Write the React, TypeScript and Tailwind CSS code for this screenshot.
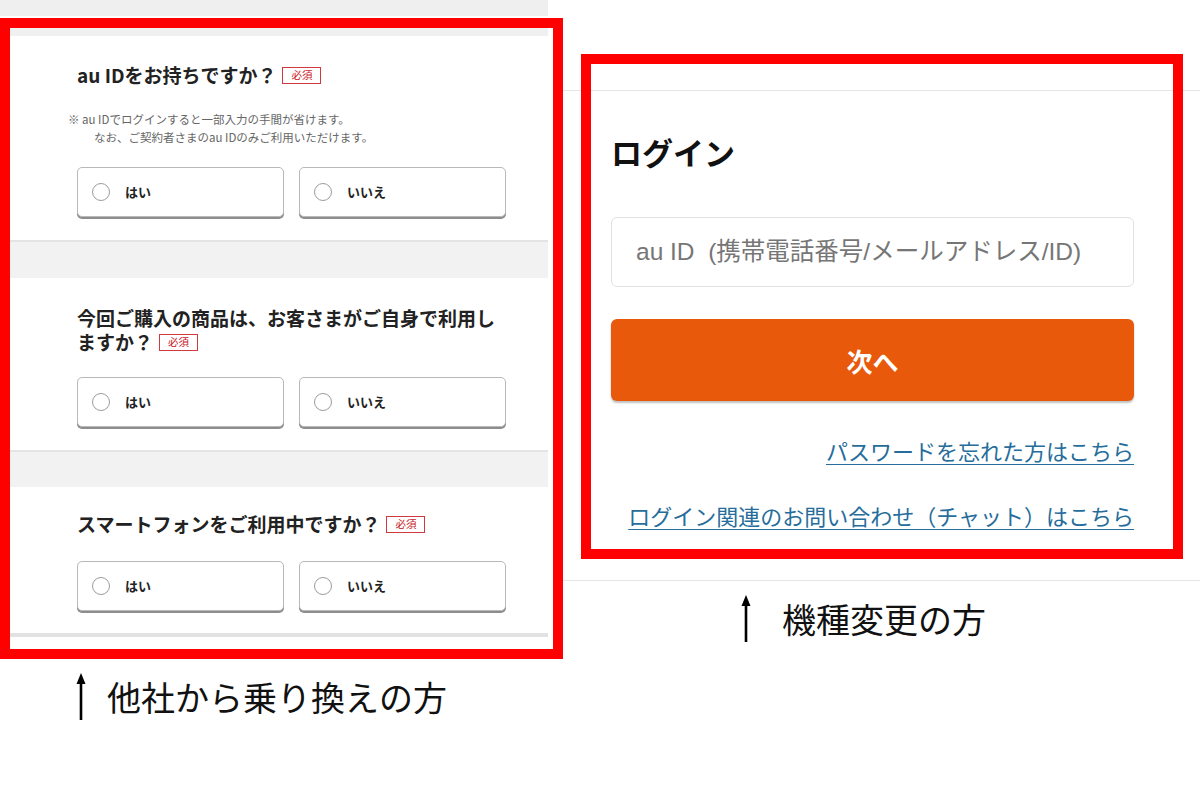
import React from "react";

const JP = "font-['Noto_Sans_CJK_JP','Noto_Sans',sans-serif]";

function Badge({ className = "" }: { className?: string }) {
  return (
    <span
      className={`inline-flex h-[17px] items-center border border-[#d2393f] bg-white px-[8px] text-[10.5px] leading-none font-normal text-[#c9161e] ${className}`}
    >
      必須
    </span>
  );
}

function Opt({ label }: { label: string }) {
  return (
    <div className="flex h-[50px] w-[207px] items-center rounded-[5px] border border-[#b9b9b9] bg-white pl-[14px] shadow-[0_2px_0_0_#8d8d8d]">
      <span className="h-[18px] w-[18px] rounded-full border border-[#9c9c9c] bg-white" />
      <span className="ml-[15px] text-[13px] font-bold text-[#222]">{label}</span>
    </div>
  );
}

function Opts({ className = "" }: { className?: string }) {
  return (
    <div className={`flex gap-[15px] ${className}`}>
      <Opt label="はい" />
      <Opt label="いいえ" />
    </div>
  );
}

function UpArrow() {
  return (
    <svg width="12" height="47" viewBox="0 0 12 47" className="shrink-0">
      <polygon points="6,0 1.5,11 10.5,11" fill="#000" />
      <rect x="4.7" y="8" width="2.6" height="39" fill="#000" />
    </svg>
  );
}

export default function App() {
  return (
    <div className={`flex h-[800px] w-[1200px] overflow-hidden bg-white ${JP}`}>
      {/* Left column */}
      <div className="w-[563px] shrink-0">
        <div className="h-[16px] w-[548px] bg-[#efefef]" />
        <div className="mt-[2px] h-[641px] border-[10px] border-[#ff0000] bg-white">
          <div className="w-[538px]">
            <div className="h-[8px] bg-[#f0f0f0]" />
            {/* Q1 */}
            <div className="h-[204px] pl-[67px] pt-[27px]">
              <div className="flex h-[24px] items-center text-[19px] leading-[24px] font-bold text-[#222]">
                <span>au IDをお持ちですか？</span>
                <Badge className="ml-[6px]" />
              </div>
              <div className="-ml-[9px] mt-[23px] text-[11.5px] leading-[18px] text-[#666]">
                <div>※ au IDでログインすると一部入力の手間が省けます。</div>
                <div className="pl-[26px]">なお、ご契約者さまのau IDのみご利用いただけます。</div>
              </div>
              <Opts className="mt-[21px]" />
            </div>
            <div className="h-[38px] border-t-2 border-[#e4e4e4] bg-[#f2f2f2]" />
            {/* Q2 */}
            <div className="h-[172px] pl-[67px] pt-[28px]">
              <div className="text-[19px] leading-[24px] font-bold text-[#222]">
                <div className="h-[24px]">今回ご購入の商品は、お客さまがご自身で利用し</div>
                <div className="flex h-[24px] items-center">
                  <span>ますか？</span>
                  <Badge className="ml-[6px]" />
                </div>
              </div>
              <Opts className="mt-[23px]" />
            </div>
            <div className="h-[37px] border-t-2 border-[#e4e4e4] bg-[#f2f2f2]" />
            {/* Q3 */}
            <div className="h-[146px] pl-[67px] pt-[25px]">
              <div className="flex h-[24px] items-center text-[19px] leading-[24px] font-bold text-[#222]">
                <span>スマートフォンをご利用中ですか？</span>
                <Badge className="ml-[6px]" />
              </div>
              <Opts className="mt-[25px]" />
            </div>
            <div className="h-[4px] bg-[#e2e2e2]" />
          </div>
        </div>
        <div className="mt-[14px] flex items-center pl-[75px]">
          <UpArrow />
          <span className="ml-[20px] text-[34px] leading-[40px] font-normal text-[#111]">
            他社から乗り換えの方
          </span>
        </div>
      </div>

      {/* Right column */}
      <div className="flex flex-1 flex-col">
        <div className="mt-[54px] flex">
          <div className="w-[18px] shrink-0 pt-[36px]">
            <div className="h-px bg-[#e6e6e6]" />
          </div>
          <div className="h-[505px] w-[602px] shrink-0 border-[10px] border-[#ff0000] bg-white">
            <div className="h-[26px]" />
            <div className="h-px bg-[#e6e6e6]" />
            <div className="w-[543px] pl-[20px]">
              <div className="mt-[41px] text-[31px] leading-[40px] font-bold text-[#111]">ログイン</div>
              <div className="mt-[45px] flex h-[70px] items-center rounded-[6px] border border-[#e2e2e2] pl-[24px] font-['Liberation_Sans','Noto_Sans_CJK_JP',sans-serif] text-[24.5px] text-[#767676]">
                au ID&nbsp; (携帯電話番号/メールアドレス/ID)
              </div>
              <div className="mt-[32px] flex h-[82px] items-center justify-center rounded-[6px] bg-[#e8590c] shadow-[0_2px_2px_rgba(0,0,0,0.25)]">
                <span className="text-[26px] font-bold text-white">次へ</span>
              </div>
              <div className="mt-[34px] flex h-[30px] items-center justify-end">
                <span className="text-[22px] leading-[30px] text-[#266d9b] underline decoration-1 underline-offset-[4px]">
                  パスワードを忘れた方はこちら
                </span>
              </div>
              <div className="mt-[35px] flex h-[30px] items-center justify-end">
                <span className="text-[22px] leading-[30px] text-[#266d9b] underline decoration-1 underline-offset-[4px]">
                  ログイン関連のお問い合わせ（チャット）はこちら
                </span>
              </div>
            </div>
          </div>
          <div className="flex-1 pt-[36px]">
            <div className="h-px bg-[#e6e6e6]" />
          </div>
        </div>
        <div className="mt-[21px] h-px bg-[#e6e6e6]" />
        <div className="mt-[14px] flex items-center pl-[177px]">
          <UpArrow />
          <span className="ml-[30px] text-[34px] leading-[40px] font-normal text-[#111]">
            機種変更の方
          </span>
        </div>
      </div>
    </div>
  );
}
